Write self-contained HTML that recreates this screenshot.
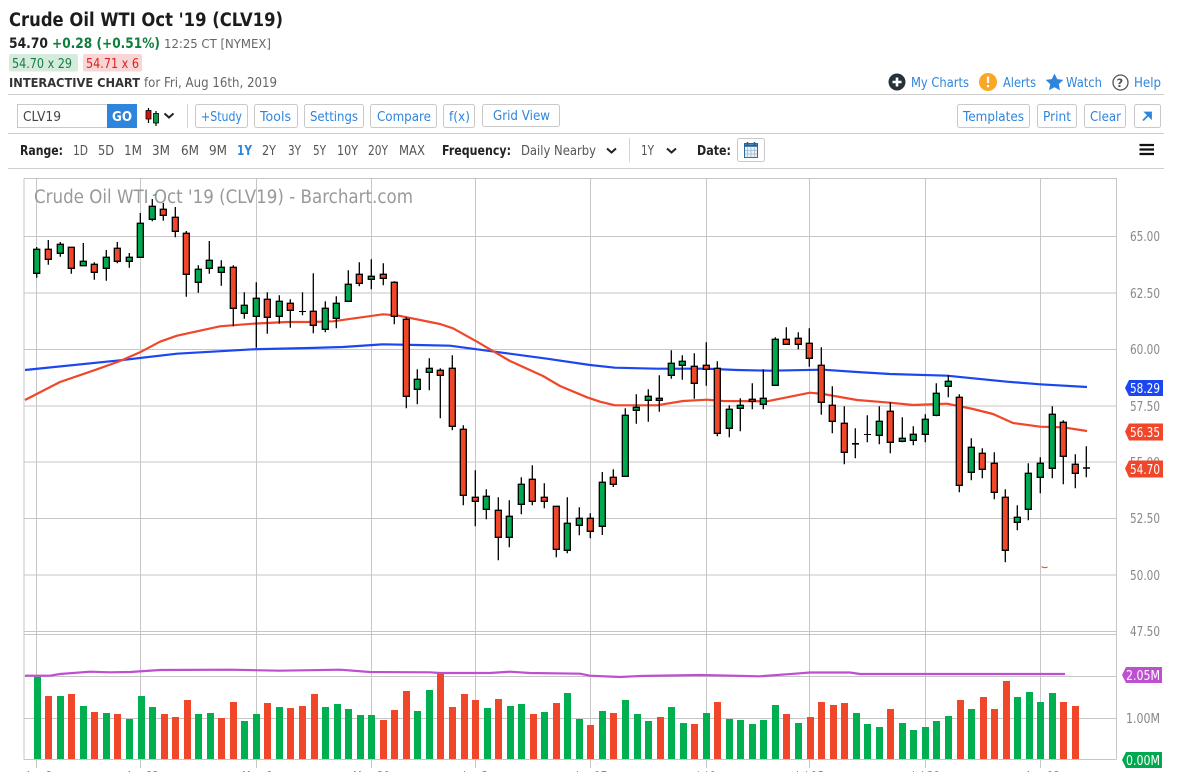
<!DOCTYPE html>
<html lang="en">
<head>
<meta charset="utf-8">
<title>Crude Oil WTI Oct '19 (CLV19)</title>
<style>
html,body{margin:0;padding:0;background:#fff;width:1177px;height:772px;overflow:hidden}
svg{display:block}
text{font-family:"DejaVu Sans","Liberation Sans",sans-serif;font-size:13px;fill:#444}
.b{fill:#2f85dc}
.g{fill:#666}
.k{fill:#222;font-weight:bold}
.ax{fill:#888;font-size:13.500px}
.tag{fill:#fff;font-size:13.500px}
.btn{fill:#fff;stroke:#c9c9c9;stroke-width:1}
.r{fill:#555}
</style>
</head>
<body>
<svg width="1177" height="772" viewBox="0 0 1177 772" xmlns="http://www.w3.org/2000/svg">
<rect width="1177" height="772" fill="#fff"/>

<!-- Header -->
<text x="9" y="26" textLength="274" lengthAdjust="spacingAndGlyphs" style="font-size:18.500px;font-weight:bold;fill:#1c1c1c">Crude Oil WTI Oct '19 (CLV19)</text>
<text x="9" y="48" textLength="39" lengthAdjust="spacingAndGlyphs" style="font-size:14px;font-weight:bold;fill:#222">54.70</text>
<text x="52" y="48" textLength="108" lengthAdjust="spacingAndGlyphs" style="font-size:14px;font-weight:bold;fill:#0f7d3e">+0.28 (+0.51%)</text>
<text x="164" y="48" textLength="107" lengthAdjust="spacingAndGlyphs" class="g" style="font-size:12.500px">12:25 CT [NYMEX]</text>
<rect x="9" y="54" width="69" height="17.500" rx="2" fill="#d6ebde"/>
<rect x="83" y="54" width="59" height="17.500" rx="2" fill="#f8d6d6"/>
<text x="12" y="68" textLength="60" lengthAdjust="spacingAndGlyphs" style="font-size:13px;fill:#12803f">54.70 x 29</text>
<text x="86" y="68" textLength="53" lengthAdjust="spacingAndGlyphs" style="font-size:13px;fill:#e0201c">54.71 x 6</text>
<text x="9" y="87" textLength="131" lengthAdjust="spacingAndGlyphs" style="font-size:12.500px;font-weight:bold;fill:#333">INTERACTIVE CHART</text>
<text x="144" y="87" textLength="133" lengthAdjust="spacingAndGlyphs" class="g" style="font-size:13px">for Fri, Aug 16th, 2019</text>

<!-- top right links -->
<circle cx="897" cy="82" r="8.500" fill="#263238"/>
<path d="M897 77.500v9M892.500 82h9" stroke="#fff" stroke-width="2.600" fill="none"/>
<text x="911" y="87" textLength="58" lengthAdjust="spacingAndGlyphs" class="b">My Charts</text>
<circle cx="988" cy="82" r="9" fill="#faa728"/>
<path d="M988 76.500v6.500M988 85v2.200" stroke="#fff" stroke-width="2.200" fill="none"/>
<text x="1003" y="87" textLength="33" lengthAdjust="spacingAndGlyphs" class="b">Alerts</text>
<path d="M1054.500 73.500l2.700 5.600 6.100.8-4.500 4.200 1.200 6.100-5.500-3-5.500 3 1.200-6.100-4.500-4.200 6.100-.8z" fill="#2f85dc"/>
<text x="1066" y="87" textLength="36" lengthAdjust="spacingAndGlyphs" class="b">Watch</text>
<circle cx="1120.500" cy="82.500" r="7.500" fill="none" stroke="#555" stroke-width="1.300"/>
<text x="1116.500" y="87" style="font-size:11.500px;font-weight:bold;fill:#555">?</text>
<text x="1134" y="87" textLength="27" lengthAdjust="spacingAndGlyphs" class="b">Help</text>

<path d="M8 94.500H1164M8 133.500H1164M8 168.500H1164" stroke="#cfcfcf" stroke-width="1" fill="none"/>

<!-- toolbar -->
<rect x="17.500" y="104.500" width="90" height="23" fill="#fff" stroke="#c9c9c9"/>
<text x="23" y="121" textLength="38" lengthAdjust="spacingAndGlyphs" style="font-size:13.500px;fill:#444">CLV19</text>
<rect x="107" y="104" width="30" height="24" fill="#2f85dc"/>
<text x="112" y="121" textLength="20" lengthAdjust="spacingAndGlyphs" style="font-size:13.500px;font-weight:bold;fill:#fff">GO</text>
<path d="M148.500 108v15M156 111v15" stroke="#000" stroke-width="1.200" fill="none"/>
<rect x="146" y="110.500" width="5" height="8.500" fill="#d8100f" stroke="#000" stroke-width=".8"/>
<rect x="153.500" y="113.500" width="5" height="9.500" fill="#0c9a4a" stroke="#000" stroke-width=".8"/>
<path d="M164.500 113.500l4.500 4 4.500-4" fill="none" stroke="#222" stroke-width="2"/>
<path d="M187.500 104V128" stroke="#d4d4d4"/>

<rect class="btn" x="195.500" y="104.500" width="52" height="23" rx="2"/>
<rect class="btn" x="254.500" y="104.500" width="43" height="23" rx="2"/>
<rect class="btn" x="304.500" y="104.500" width="59" height="23" rx="2"/>
<rect class="btn" x="370.500" y="104.500" width="66" height="23" rx="2"/>
<rect class="btn" x="443.500" y="104.500" width="31" height="23" rx="2"/>
<rect class="btn" x="482.500" y="104.500" width="77" height="22" rx="2"/>
<text x="201" y="121" textLength="41" lengthAdjust="spacingAndGlyphs" class="b">+Study</text>
<text x="260" y="121" textLength="31" lengthAdjust="spacingAndGlyphs" class="b">Tools</text>
<text x="310" y="121" textLength="48" lengthAdjust="spacingAndGlyphs" class="b">Settings</text>
<text x="377" y="121" textLength="54" lengthAdjust="spacingAndGlyphs" class="b">Compare</text>
<text x="449" y="121" textLength="21" lengthAdjust="spacingAndGlyphs" class="b">f(x)</text>
<text x="493" y="120" textLength="57" lengthAdjust="spacingAndGlyphs" class="b">Grid View</text>

<rect class="btn" x="957.500" y="104.500" width="72" height="23" rx="2"/>
<rect class="btn" x="1037.500" y="104.500" width="39" height="23" rx="2"/>
<rect class="btn" x="1084.500" y="104.500" width="41" height="23" rx="2"/>
<rect class="btn" x="1134.500" y="104.500" width="26" height="23" rx="2"/>
<text x="963" y="121" textLength="61" lengthAdjust="spacingAndGlyphs" class="b">Templates</text>
<text x="1043" y="121" textLength="28" lengthAdjust="spacingAndGlyphs" class="b">Print</text>
<text x="1090" y="121" textLength="31" lengthAdjust="spacingAndGlyphs" class="b">Clear</text>
<path d="M1143 120.500l7.500-7.500M1145.500 112.500h5.500v5.500z" stroke="#2f85dc" stroke-width="1.800" fill="#2f85dc"/>

<!-- range row -->
<text x="20" y="155" textLength="43" lengthAdjust="spacingAndGlyphs" class="k">Range:</text>
<text x="73" y="155" textLength="15" lengthAdjust="spacingAndGlyphs" class="r">1D</text>
<text x="98" y="155" textLength="16" lengthAdjust="spacingAndGlyphs" class="r">5D</text>
<text x="124" y="155" textLength="18" lengthAdjust="spacingAndGlyphs" class="r">1M</text>
<text x="152" y="155" textLength="18" lengthAdjust="spacingAndGlyphs" class="r">3M</text>
<text x="181" y="155" textLength="18" lengthAdjust="spacingAndGlyphs" class="r">6M</text>
<text x="209" y="155" textLength="18" lengthAdjust="spacingAndGlyphs" class="r">9M</text>
<text x="237" y="155" textLength="15" lengthAdjust="spacingAndGlyphs" style="font-weight:bold;fill:#2f85dc">1Y</text>
<text x="262" y="155" textLength="14" lengthAdjust="spacingAndGlyphs" class="r">2Y</text>
<text x="288" y="155" textLength="13" lengthAdjust="spacingAndGlyphs" class="r">3Y</text>
<text x="313" y="155" textLength="13" lengthAdjust="spacingAndGlyphs" class="r">5Y</text>
<text x="337" y="155" textLength="21" lengthAdjust="spacingAndGlyphs" class="r">10Y</text>
<text x="368" y="155" textLength="20" lengthAdjust="spacingAndGlyphs" class="r">20Y</text>
<text x="399" y="155" textLength="26" lengthAdjust="spacingAndGlyphs" class="r">MAX</text>
<text x="442" y="155" textLength="69" lengthAdjust="spacingAndGlyphs" class="k">Frequency:</text>
<text x="521" y="155" textLength="75" lengthAdjust="spacingAndGlyphs" class="r">Daily Nearby</text>
<path d="M607 148.500l4.500 4 4.500-4" fill="none" stroke="#222" stroke-width="2"/>
<path d="M629.500 138V162" stroke="#d4d4d4"/>
<text x="641" y="155" textLength="13" lengthAdjust="spacingAndGlyphs" class="r">1Y</text>
<path d="M667 148.500l4.500 4 4.500-4" fill="none" stroke="#222" stroke-width="2"/>
<text x="697" y="155" textLength="34" lengthAdjust="spacingAndGlyphs" class="k">Date:</text>
<rect class="btn" x="737.500" y="138.500" width="27" height="23" rx="2"/>
<rect x="744.500" y="143.500" width="13" height="14" fill="#eaf1f7" stroke="#2a6a9e" stroke-width="1"/>
<path d="M744 145.500h14" stroke="#1f6097" stroke-width="2.500"/>
<path d="M747.500 147.500v10M751 147.500v10M754.500 147.500v10M745 150.500h12M745 154h12" stroke="#9db9d2" stroke-width=".8"/>
<path d="M747.500 142v3M754.500 142v3" stroke="#1f6097" stroke-width="1.500"/>
<path d="M1139.500 145h14.500M1139.500 149.500h14.500M1139.500 154h14.500" stroke="#111" stroke-width="2.200"/>

<!-- chart grid -->
<path d="M24 236.500H1116M24 293H1116M24 349.500H1116M24 406H1116M24 462H1116M24 518.500H1116M24 575H1116M24 631.500H1116M24 634.500H1116M24 676.500H1116M24 718.500H1116M24 759.500H1116" stroke="#c6c6c6" stroke-width="1" fill="none"/>
<path d="M24 178.500H1116.500V759.500M24 178.500V759.500" stroke="#c6c6c6" stroke-width="1" fill="none"/>
<path d="M36.500 179V768M140.500 179V768M256.500 179V768M371.500 179V768M475.500 179V768M590.500 179V768M706.500 179V768M809.500 179V768M925.500 179V768M1040.500 179V768" stroke="#c6c6c6" stroke-width="1" fill="none"/>

<text x="34" y="203" textLength="379" lengthAdjust="spacingAndGlyphs" style="font-size:18.500px;fill:#999">Crude Oil WTI Oct '19 (CLV19) - Barchart.com</text>

<!-- moving averages -->
<path d="M25 370 120 360.300 177 353.700 253 349.300 310 348 343 347 383 344.300 417 345 450 345.700 477 349.300 507 353.300 547 358.700 590 365 615 367.700 657 368.700 707 368.700 737 370 770 370.700 823 369.700 857 372 890 374 947 375.700 1007 381.700 1040 384.300 1087 387" fill="none" stroke="#1b46f0" stroke-width="2.200" stroke-linejoin="round"/>
<path d="M25 400 60 382 97 369.300 120 361 140 352.300 160 341.700 177 335.700 220 326.300 253 323.700 287 322 310 322 333 321.300 383 314.300 397 315.300 440 324 453 328.300 477 341.700 510 361 543 376 560 386 587 397.300 600 401.700 615 405.300 657 405.300 683 401 707 399.700 723 401 767 401.300 810 392.700 823 394 857 400 890 402.700 913 405 947 403.700 973 409 993 414 1013 423 1040 426.700 1063 427.300 1087 431" fill="none" stroke="#f0462a" stroke-width="2.200" stroke-linejoin="round"/>

<!-- wicks -->
<path d="M36.700 247V277.700M48.300 240V264.700M60.300 242V256.700M71.300 247V273.700M83.300 243V265.700M94.300 262.300V279.700M106.300 250V280.700M117.300 242V263.300M129.300 253V267.700M140.300 213V257.300M152.300 199V221.300M163.300 203V220.700M175.300 207V237.300M186.300 231V296.700M198.300 265.300V292.700M209.300 241V273.700M221.300 260.300V285.700M233.300 265.300V326.300M244.300 292.300V318.700M256.300 282.300V347.700M267.300 292.300V333.700M279.300 295.300V323.700M290.300 299.300V327.700M302.500 292.300V315.300M313.300 273.300V333.300M325.300 301.300V332.300M336.300 296.300V328.300M348.300 270.300V301.300M359.300 262.300V286.300M371.300 259.300V289.300M383.300 263.300V285.300M394.300 281.300V324.300M406.300 317.300V408.300M417.300 369.300V404.300M429.300 358.300V390.300M440.300 368.300V418.300M452.300 355.300V430.300M463.300 425.300V505.300M475.300 470.300V526.300M486.300 489.300V519.300M498.300 497.300V560.300M509.300 500.300V547.300M521.300 477.300V514.300M532.300 465.300V505.300M544.300 483.300V508.300M556.300 506.300V557.300M567.300 497.300V553.300M579.300 507.300V535.300M590.300 513.300V538.300M602.300 472V535M613.300 469.300V487M625.300 408.300V476.300M636.300 394.300V423.700M648.300 389.300V421.700M659.300 375.300V411.700M671.300 350.300V378.700M682.300 355.300V379.700M694.300 353.300V398.700M706.300 342.300V385.700M717.300 361.300V436.300M729.300 405.300V437.300M740.300 398.300V431.300M752.300 383.300V409.300M763.300 369.300V409.300M775.300 337.300V385.300M786.300 327.300V344.300M798.300 332.300V349.300M809.300 328.300V366.700M821.300 347.300V414.700M832.300 386.300V433.300M844.300 406.300V464.300M855.300 428.300V458.300M867.300 415.300V442.300M879.300 406.300V444.300M890.300 402.300V453.300M902.300 417.300V442.300M913.300 426.300V445.300M925.300 414.300V442.300M936.300 383.300V416.300M948.300 375.300V397.300M959.300 394.300V492.300M971.300 438.300V480.300M982.300 448.300V478.300M994.300 452.300V499.300M1005.300 489.300V562.300M1017.300 505.300V530.300M1028.300 463.300V520.300M1040.300 457.300V493.300M1052.300 406.300V478.300M1063.300 420.300V484.300M1075.300 454.300V488.300M1086.300 446.300V477.300" stroke="#000" stroke-width="1.300" fill="none"/>
<!-- doji ticks -->
<path d="M299 311.500H306M864 434.500H871" stroke="#000" stroke-width="1" fill="none"/>
<path d="M852 443.800H859M1083 468H1090" stroke="#000" stroke-width="1.600" fill="none"/>

<!-- green bodies -->
<path fill="#00a94f" stroke="#000" stroke-width="1.300" d="M33.700 249.300h6v24h-6zM57.300 244.300h6v9h-6zM80.300 261.300h6v4.400h-6zM103.300 257.300h6v11h-6zM126.300 257.300h6v4h-6zM137.300 223.300h6v34h-6zM149.300 206.300h6v13h-6zM195.300 269.300h6v13h-6zM206.300 260.300h6v8h-6zM218.300 267.300h6v5h-6zM241.300 305.300h6v8h-6zM253.300 298.300h6v18h-6zM276.300 301.300h6v15h-6zM322.300 308.300h6v21h-6zM333.300 303.300h6v15h-6zM345.300 284.300h6v17h-6zM368.300 276.300h6v3h-6zM414.300 379.300h6v10h-6zM426.300 368.300h6v4h-6zM483.300 496.300h6v13h-6zM506.300 516.300h6v21h-6zM518.300 484.300h6v20h-6zM564.300 523.300h6v27h-6zM576.300 518.300h6v7h-6zM599.300 482.300h6v44h-6zM622.300 415.300h6v61h-6zM633.300 407.300h6v3h-6zM645.300 396.300h6v4h-6zM656.300 398.300h6v2h-6zM668.300 363.300h6v12h-6zM679.300 361.300h6v4h-6zM726.300 409.300h6v19h-6zM737.300 405.300h6v3h-6zM760.300 398.300h6v6h-6zM772.300 339.300h6v46h-6zM876.300 421.300h6v14h-6zM899.300 438.300h6v3h-6zM910.300 434.300h6v6h-6zM922.300 419.300h6v15h-6zM933.300 393.300h6v22h-6zM945.300 381.300h6v5h-6zM968.300 447.300h6v25h-6zM1014.300 517.300h6v5h-6zM1025.300 473.300h6v36h-6zM1037.300 463.300h6v14h-6zM1049.300 414.300h6v54h-6z"/>
<!-- red bodies -->
<path fill="#f0462a" stroke="#000" stroke-width="1.300" d="M45.300 249.300h6v10h-6zM68.300 247.300h6v21h-6zM91.300 264.300h6v8h-6zM114.300 248.300h6v13h-6zM160.300 209.300h6v6h-6zM172.300 217.300h6v14h-6zM183.300 233.300h6v41h-6zM230.300 267.300h6v41h-6zM264.300 299.300h6v18h-6zM287.300 303.300h6v7h-6zM310.300 311.300h6v14h-6zM356.300 274.300h6v9h-6zM380.300 274.300h6v4h-6zM391.300 282.300h6v34h-6zM403.300 319.300h6v77h-6zM437.300 370.300h6v5h-6zM449.300 368.300h6v58h-6zM460.300 429.300h6v66h-6zM472.300 497.300h6v4h-6zM495.300 510.300h6v27h-6zM529.300 479.300h6v22h-6zM541.300 497.300h6v4h-6zM553.300 506.300h6v43h-6zM587.300 518.300h6v13h-6zM610.300 477.300h6v7h-6zM691.300 366.300h6v17h-6zM703.300 365.300h6v4h-6zM714.300 368.300h6v65h-6zM749.300 399.300h6v2h-6zM783.300 339.300h6v5h-6zM795.300 338.300h6v6h-6zM806.300 343.300h6v15h-6zM818.300 365.300h6v37h-6zM829.300 405.300h6v16h-6zM841.300 423.300h6v29h-6zM887.300 411.300h6v31h-6zM956.300 397.300h6v88h-6zM979.300 453.300h6v16h-6zM991.300 463.300h6v29h-6zM1002.300 497.300h6v53h-6zM1060.300 422.300h6v34h-6zM1072.300 464.300h6v9h-6z"/>
<path d="M153 195.500l3-1" stroke="#00a94f" stroke-width="1" fill="none"/>
<path d="M1041.500 566.500q2.500 2 6 .5" stroke="#f0462a" stroke-width="1.100" fill="none"/>

<!-- volume bars -->
<path fill="#00af50" d="M34 676.700h7V759h-7zM57 696h7v63h-7zM80 706h7v53h-7zM103 713h7v46h-7zM126 719h7v40h-7zM138 696h7v63h-7zM149 707h7v52h-7zM195 714h7v45h-7zM207 713h7v46h-7zM241 721h7v38h-7zM253 714h7v45h-7zM276 707h7v52h-7zM322 707h7v52h-7zM334 704h7v55h-7zM345 709h7v50h-7zM357 715h7v44h-7zM368 715h7v44h-7zM414 711h7v48h-7zM426 690h7v69h-7zM484 708h7v51h-7zM507 706h7v53h-7zM518 704h7v55h-7zM541 712h7v47h-7zM564 693h7v66h-7zM576 719h7v40h-7zM599 711h7v48h-7zM622 700h7v59h-7zM634 714h7v45h-7zM645 721h7v38h-7zM668 707h7v52h-7zM680 723h7v36h-7zM703 713h7v46h-7zM726 719h7v40h-7zM737 720h7v39h-7zM749 724h7v35h-7zM760 720h7v39h-7zM772 705h7v54h-7zM795 723h7v36h-7zM853 713h7v46h-7zM864 724h7v35h-7zM876 727h7v32h-7zM899 723h7v36h-7zM910 730h7v29h-7zM922 727h7v32h-7zM933 721h7v38h-7zM945 716h7v43h-7zM968 709h7v50h-7zM1014 697h7v62h-7zM1026 692h7v67h-7zM1037 702h7v57h-7zM1049 693h7v66h-7z"/>
<path fill="#f0462a" d="M45 696h7v63h-7zM68 694h7v65h-7zM91 712h7v47h-7zM114 714h7v45h-7zM161 714h7v45h-7zM172 717h7v42h-7zM184 700h7v59h-7zM218 718h7v41h-7zM230 702h7v57h-7zM264 703h7v56h-7zM287 708h7v51h-7zM299 706h7v53h-7zM311 694h7v65h-7zM380 720h7v39h-7zM391 710h7v49h-7zM403 691h7v68h-7zM437 673.700h7V759h-7zM449 707h7v52h-7zM461 694h7v65h-7zM472 700h7v59h-7zM495 699h7v60h-7zM530 714h7v45h-7zM553 703h7v56h-7zM587 725h7v34h-7zM610 713h7v46h-7zM657 717h7v42h-7zM691 724h7v35h-7zM714 702h7v57h-7zM783 714h7v45h-7zM807 717h7v42h-7zM818 702h7v57h-7zM830 705h7v54h-7zM841 703h7v56h-7zM887 709h7v50h-7zM957 700h7v59h-7zM980 697h7v62h-7zM991 709h7v50h-7zM1003 681h7v78h-7zM1060 702h7v57h-7zM1072 706h7v53h-7z"/>
<path d="M25 675.700 50 675.700 60 674 90 671.700 110 672.300 130 672 160 670 230 669.700 280 670.700 340 669.700 370 672 430 672.300 440 673 490 673 510 671.700 530 673 580 673.700 590 675.700 620 677 640 676 700 675 760 676.300 795 673.700 810 672.500 850 672.500 860 674 1065 674" fill="none" stroke="#bd4fd0" stroke-width="2.200" stroke-linejoin="round"/>

<!-- right axis -->
<text x="1130" y="241" textLength="30" lengthAdjust="spacingAndGlyphs" class="ax">65.00</text>
<text x="1130" y="298" textLength="30" lengthAdjust="spacingAndGlyphs" class="ax">62.50</text>
<text x="1130" y="354" textLength="30" lengthAdjust="spacingAndGlyphs" class="ax">60.00</text>
<text x="1130" y="411" textLength="30" lengthAdjust="spacingAndGlyphs" class="ax">57.50</text>
<text x="1130" y="467" textLength="30" lengthAdjust="spacingAndGlyphs" class="ax">55.00</text>
<text x="1130" y="523" textLength="30" lengthAdjust="spacingAndGlyphs" class="ax">52.50</text>
<text x="1130" y="580" textLength="30" lengthAdjust="spacingAndGlyphs" class="ax">50.00</text>
<text x="1130" y="636" textLength="30" lengthAdjust="spacingAndGlyphs" class="ax">47.50</text>
<text x="1126" y="723" textLength="34" lengthAdjust="spacingAndGlyphs" class="ax">1.00M</text>

<path d="M1125 388l4-8h34v16h-34z" fill="#1b46f0"/>
<text x="1130" y="393" textLength="30" lengthAdjust="spacingAndGlyphs" class="tag">58.29</text>
<path d="M1125 431.500l4-8h34v17h-34z" fill="#f0462a"/>
<text x="1130" y="437" textLength="30" lengthAdjust="spacingAndGlyphs" class="tag">56.35</text>
<path d="M1125 468.500l4-8h34v17h-34z" fill="#f0462a"/>
<text x="1130" y="474" textLength="30" lengthAdjust="spacingAndGlyphs" class="tag">54.70</text>
<path d="M1122 675l4-8h36v16h-36z" fill="#bd4fd0"/>
<text x="1126" y="680" textLength="34" lengthAdjust="spacingAndGlyphs" class="tag">2.05M</text>
<path d="M1122 760l4-8h36v16h-36z" fill="#00a94f"/>
<text x="1126" y="765" textLength="34" lengthAdjust="spacingAndGlyphs" class="tag">0.00M</text>

<!-- date labels (clipped by the viewport) -->
<g>
<text x="25" y="781" textLength="27" lengthAdjust="spacingAndGlyphs" class="ax">Apr 8</text>
<text x="126" y="781" textLength="33" lengthAdjust="spacingAndGlyphs" class="ax">Apr 22</text>
<text x="242" y="781" textLength="30" lengthAdjust="spacingAndGlyphs" class="ax">May 6</text>
<text x="353" y="781" textLength="37" lengthAdjust="spacingAndGlyphs" class="ax">May 20</text>
<text x="463" y="781" textLength="25" lengthAdjust="spacingAndGlyphs" class="ax">Jun 3</text>
<text x="576" y="781" textLength="31" lengthAdjust="spacingAndGlyphs" class="ax">Jun 17</text>
<text x="697" y="781" textLength="19" lengthAdjust="spacingAndGlyphs" class="ax">Jul 1</text>
<text x="796" y="781" textLength="28" lengthAdjust="spacingAndGlyphs" class="ax">Jul 15</text>
<text x="912" y="781" textLength="28" lengthAdjust="spacingAndGlyphs" class="ax">Jul 29</text>
<text x="1025" y="781" textLength="35" lengthAdjust="spacingAndGlyphs" class="ax">Aug 12</text>
</g>
</svg>
</body>
</html>
